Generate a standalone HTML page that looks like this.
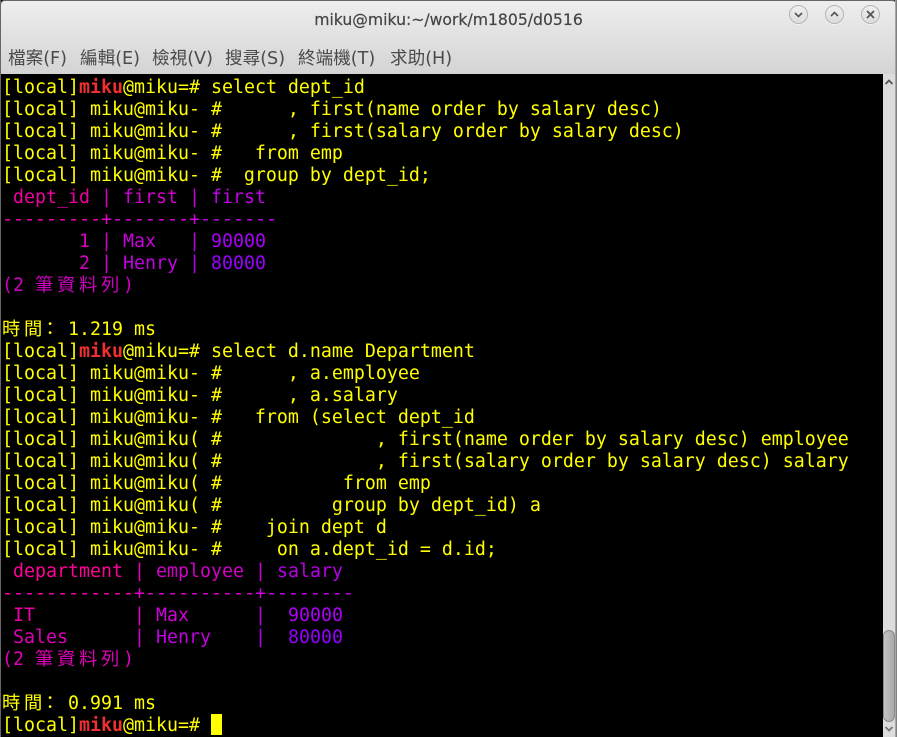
<!DOCTYPE html>
<html><head><meta charset="utf-8"><style>
html,body{margin:0;padding:0;background:#000}
#w{position:relative;width:897px;height:737px;overflow:hidden;background:#000}
#tb{position:absolute;left:0;top:0;width:897px;height:74px;background:linear-gradient(#eeeeee,#d4d4d4);border-radius:5px 5px 0 0;box-shadow:inset 0 1px 0 #666,inset 1px 0 0 #777,inset -1px 0 0 #888}
#title{position:absolute;left:0;right:0;top:10px;text-align:center;font:15.65px/20px "DejaVu Sans",sans-serif;color:#444;-webkit-text-stroke:.2px #444}
.m{position:absolute;top:48px;font:17.6px/22px "DejaVu Sans","WenQuanYi Zen Hei","Noto Sans CJK TC",sans-serif;color:#4a4a4a;white-space:pre}
.b{position:absolute;top:5px;width:17px;height:17px;border-radius:50%;background:linear-gradient(#f0f0f0,#dcdcdc);border:1px solid #b4b4b4;box-shadow:0 1px 0 #f4f4f4}
.b svg{position:absolute;left:0;top:0}
#t{position:absolute;left:2px;top:77px;margin:0;font:18.27px/22px "DejaVu Sans Mono","WenQuanYi Zen Hei","Noto Sans CJK TC",monospace;color:#ff0;white-space:pre}
#t div{height:22px}
#t b{color:#f03030;font-weight:bold}
.c{display:inline-block;width:22px;text-align:left}
.k{position:relative;left:-5px}
#cur{position:absolute;left:211px;top:714px;width:11px;height:21px;background:#ff0}
#sb{position:absolute;left:883px;top:74px;width:12px;height:663px;background:#dcdcdc}
#th{position:absolute;left:883px;top:630px;width:12px;height:92px;background:linear-gradient(90deg,#c4c4c4,#a8a8a8);border:1px solid #8a8a8a;border-radius:6px;box-sizing:border-box}
#rb{position:absolute;left:895px;top:0;width:2px;height:737px;background:linear-gradient(90deg,#b8b8b8,#707070)}
#lb{position:absolute;left:0;top:0;width:1px;height:737px;background:#666}
svg{display:block}
</style></head><body><div id="w">
<div id="tb"></div>
<div id="title">miku@miku:~/work/m1805/d0516</div>
<div class="b" style="left:789px"><svg width="17" height="17"><path d="M5 7l3.500 3.500L12 7" fill="none" stroke="#555" stroke-width="1.600"/></svg></div>
<div class="b" style="left:825px"><svg width="17" height="17"><path d="M5 10l3.500-3.500L12 10" fill="none" stroke="#555" stroke-width="1.600"/></svg></div>
<div class="b" style="left:861px"><svg width="17" height="17"><path d="M5 5l7 7M12 5l-7 7" fill="none" stroke="#555" stroke-width="1.800"/></svg></div>
<div class="m" style="left:8px">檔案(F)</div>
<div class="m" style="left:80px">編輯(E)</div>
<div class="m" style="left:152px">檢視(V)</div>
<div class="m" style="left:225px">搜尋(S)</div>
<div class="m" style="left:298px">終端機(T)</div>
<div class="m" style="left:390px">求助(H)</div>
<pre id="t"><div>[local]<b>miku</b>@miku=# select dept_id</div><div>[local] miku@miku- #      , first(name order by salary desc)</div><div>[local] miku@miku- #      , first(salary order by salary desc)</div><div>[local] miku@miku- #   from emp</div><div>[local] miku@miku- #  group by dept_id;</div><div> <span style="color:#f000a0">dept_id</span> <span style="color:#e000c0">|</span> <span style="color:#d400d0">first</span> <span style="color:#c800d8">|</span> <span style="color:#c000e8">first</span></div><div><span style="color:#ff00b0">---------</span><span style="color:#e800c8">+</span><span style="color:#e000d8">-------</span><span style="color:#d400e4">+</span><span style="color:#c800f0">-------</span></div><div>       <span style="color:#e000c0">1</span> <span style="color:#d800d0">|</span> <span style="color:#c800dc">Max</span>   <span style="color:#b800e4">|</span> <span style="color:#a800f8">90000</span></div><div>       <span style="color:#d800c0">2</span> <span style="color:#d000d0">|</span> <span style="color:#c000e0">Henry</span> <span style="color:#b000f0">|</span> <span style="color:#9800ff">80000</span></div><div><span style="color:#d000c0">(2 <span class="c">筆</span><span class="c">資</span><span class="c">料</span><span class="c">列</span>)</span></div><div> </div><div><span class="c">時</span><span class="c">間</span><span class="c k">：</span>1.219 ms</div><div>[local]<b>miku</b>@miku=# select d.name Department</div><div>[local] miku@miku- #      , a.employee</div><div>[local] miku@miku- #      , a.salary</div><div>[local] miku@miku- #   from (select dept_id</div><div>[local] miku@miku( #              , first(name order by salary desc) employee</div><div>[local] miku@miku( #              , first(salary order by salary desc) salary</div><div>[local] miku@miku( #           from emp</div><div>[local] miku@miku( #          group by dept_id) a</div><div>[local] miku@miku- #    join dept d</div><div>[local] miku@miku- #     on a.dept_id = d.id;</div><div> <span style="color:#ff0098">department</span> <span style="color:#e400b8">|</span> <span style="color:#d400c8">employee</span> <span style="color:#c800d8">|</span> <span style="color:#b800e8">salary</span></div><div><span style="color:#ff00b0">------------</span><span style="color:#e800c8">+</span><span style="color:#e000d8">----------</span><span style="color:#d400e4">+</span><span style="color:#c800f0">--------</span></div><div> <span style="color:#f000a8">IT</span>         <span style="color:#e000c8">|</span> <span style="color:#d000d8">Max</span>      <span style="color:#c000e0">|</span>  <span style="color:#ac00f8">90000</span></div><div> <span style="color:#e000b8">Sales</span>      <span style="color:#d400cc">|</span> <span style="color:#c000e0">Henry</span>    <span style="color:#b000f0">|</span>  <span style="color:#9400ff">80000</span></div><div><span style="color:#e000b8">(2 <span class="c">筆</span><span class="c">資</span><span class="c">料</span><span class="c">列</span>)</span></div><div> </div><div><span class="c">時</span><span class="c">間</span><span class="c k">：</span>0.991 ms</div><div>[local]<b>miku</b>@miku=# </div></pre>
<div id="cur"></div>
<div id="sb"><svg width="12" height="16" style="position:absolute;left:0;top:0"><path d="M2.500 10l3.500-3.500L9.500 10" fill="none" stroke="#555" stroke-width="1.800"/></svg><svg width="12" height="16" style="position:absolute;left:0;top:648px"><path d="M2.500 5l3.500 3.500L9.500 5" fill="none" stroke="#777" stroke-width="1.800"/></svg></div>
<div id="th"></div>
<div id="rb"></div>
<div id="lb"></div>
</div></body></html>
